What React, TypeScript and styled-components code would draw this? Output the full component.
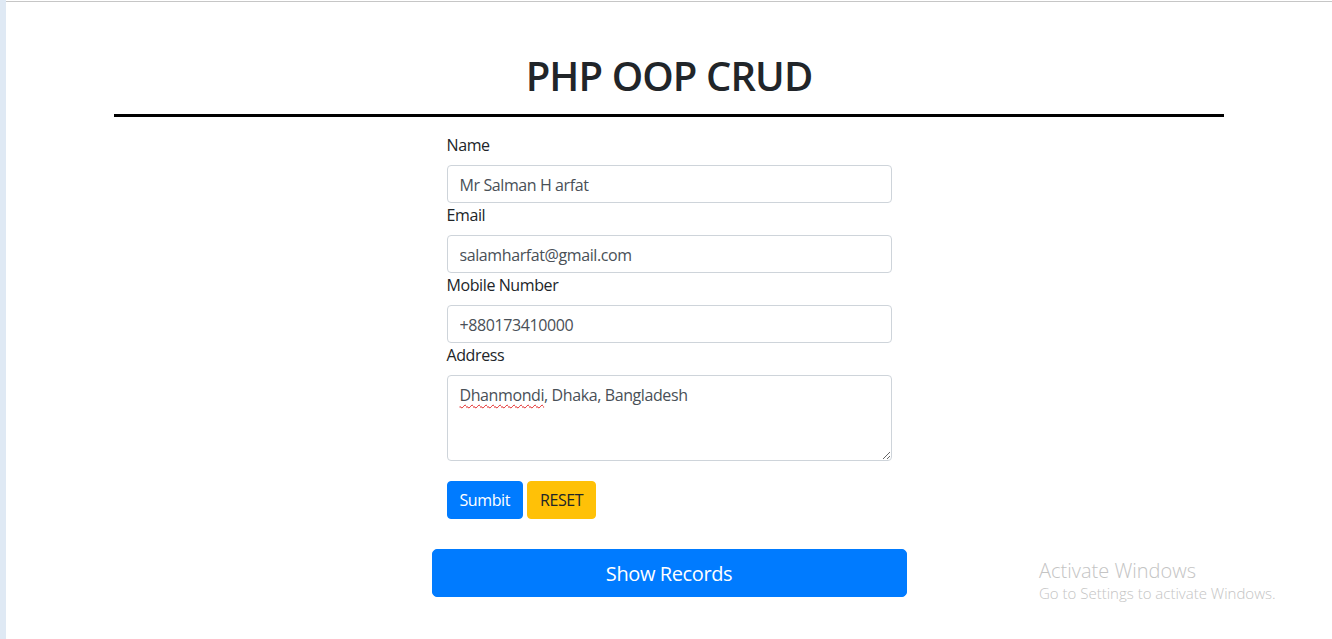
import React from "react";
import styled, { createGlobalStyle } from "styled-components";

const GlobalStyle = createGlobalStyle`
  html, body {
    margin: 0;
    padding: 0;
    background: #ffffff;
  }
  body {
    font-family: "Open Sans", "Noto Sans", "Liberation Sans", sans-serif;
    font-size: 16px;
    line-height: 1.5;
    letter-spacing: -0.4px;
    color: #212529;
  }
  * { box-sizing: border-box; }
`;

const Frame = styled.div`
  display: flex;
  min-height: 639px;
  position: relative;
`;

const SideStrip = styled.div`
  width: 6px;
  flex: 0 0 6px;
  background: #dfe9f4;
`;

const Viewport = styled.main`
  flex: 1;
  margin-top: 1px;
  border-top: 1px solid #c6c6c6;
  display: flex;
  flex-direction: column;
  align-items: center;
`;

const Container = styled.div`
  width: 1110px;
  display: flex;
  flex-direction: column;
  align-items: center;
`;

const Title = styled.h1`
  width: 100%;
  margin: 0;
  padding: 50px 0 14px;
  border-bottom: 3px solid #000;
  text-align: center;
  font-size: 40px;
  font-weight: 600;
  letter-spacing: -0.9px;
  line-height: 1.2;
  color: #212529;
`;

const Form = styled.form`
  width: 445px;
  margin-top: 16px;
  display: flex;
  flex-direction: column;
`;

const Label = styled.label`
  display: block;
  margin-bottom: 8px;
  font-size: 16px;
  line-height: 24px;
  color: #212529;
`;

const Input = styled.input`
  display: block;
  width: 100%;
  height: 38px;
  padding: 7px 12px 5px;
  font: inherit;
  font-size: 16px;
  line-height: 24px;
  letter-spacing: -0.4px;
  color: #495057;
  background: #fff;
  border: 1px solid #ced4da;
  border-radius: 4px;
  outline: none;
`;

const AreaWrap = styled.div`
  position: relative;
`;

const TextArea = styled.textarea`
  display: block;
  width: 100%;
  height: 86px;
  padding: 7px 12px 5px;
  font: inherit;
  font-size: 16px;
  line-height: 24px;
  letter-spacing: -0.4px;
  color: #495057;
  background: #fff;
  border: 1px solid #ced4da;
  border-radius: 4px;
  outline: none;
  resize: both;
`;

const SpellMark = styled.span`
  position: absolute;
  left: 13px;
  top: 8px;
  font-size: 16px;
  line-height: 24px;
  letter-spacing: -0.4px;
  color: transparent;
  text-decoration: underline wavy #e02020;
  text-decoration-thickness: 1px;
  text-underline-offset: 3px;
  pointer-events: none;
`;

const ButtonRow = styled.div`
  display: flex;
  gap: 4px;
  margin-top: 20px;
`;

const Button = styled.button<{ $variant: "primary" | "warning" }>`
  font: inherit;
  font-size: 16px;
  line-height: 24px;
  letter-spacing: -0.4px;
  padding: 6px 12px;
  border-radius: 4px;
  border: 1px solid ${(p) => (p.$variant === "primary" ? "#007bff" : "#ffc107")};
  background: ${(p) => (p.$variant === "primary" ? "#007bff" : "#ffc107")};
  color: ${(p) => (p.$variant === "primary" ? "#fff" : "#212529")};
  cursor: pointer;
`;

const BigButton = styled.button`
  margin-top: 30px;
  width: 475px;
  font: inherit;
  font-size: 20px;
  line-height: 30px;
  letter-spacing: -0.4px;
  padding: 9px 16px 7px;
  border-radius: 5px;
  border: 1px solid #007bff;
  background: #007bff;
  color: #fff;
  cursor: pointer;
`;

const Watermark = styled.div`
  position: absolute;
  left: 1039px;
  top: 558px;
  color: #c4c4c4;
  font-family: "Open Sans", "Noto Sans", sans-serif;
  letter-spacing: 0;
  pointer-events: none;
`;

const WatermarkTitle = styled.div`
  font-size: 20px;
  font-weight: 300;
  line-height: 26px;
`;

const WatermarkSub = styled.div`
  font-size: 15px;
  font-weight: 300;
  line-height: 19px;
`;

export default function App() {
  return (
    <>
      <GlobalStyle />
      <Frame>
        <SideStrip />
        <Viewport>
          <Container>
            <Title>PHP OOP CRUD</Title>
            <Form onSubmit={(e) => e.preventDefault()}>
              <Label htmlFor="name">Name</Label>
              <Input id="name" defaultValue="Mr Salman H arfat" />
              <Label htmlFor="email">Email</Label>
              <Input id="email" defaultValue="salamharfat@gmail.com" />
              <Label htmlFor="mobile">Mobile Number</Label>
              <Input id="mobile" defaultValue="+880173410000" />
              <Label htmlFor="address">Address</Label>
              <AreaWrap>
                <TextArea id="address" rows={3} defaultValue="Dhanmondi, Dhaka, Bangladesh" spellCheck={false} />
                <SpellMark aria-hidden="true">Dhanmondi</SpellMark>
              </AreaWrap>
              <ButtonRow>
                <Button type="submit" $variant="primary">Sumbit</Button>
                <Button type="reset" $variant="warning">RESET</Button>
              </ButtonRow>
            </Form>
            <BigButton type="button">Show Records</BigButton>
          </Container>
        </Viewport>
        <Watermark>
          <WatermarkTitle>Activate Windows</WatermarkTitle>
          <WatermarkSub>Go to Settings to activate Windows.</WatermarkSub>
        </Watermark>
      </Frame>
    </>
  );
}
